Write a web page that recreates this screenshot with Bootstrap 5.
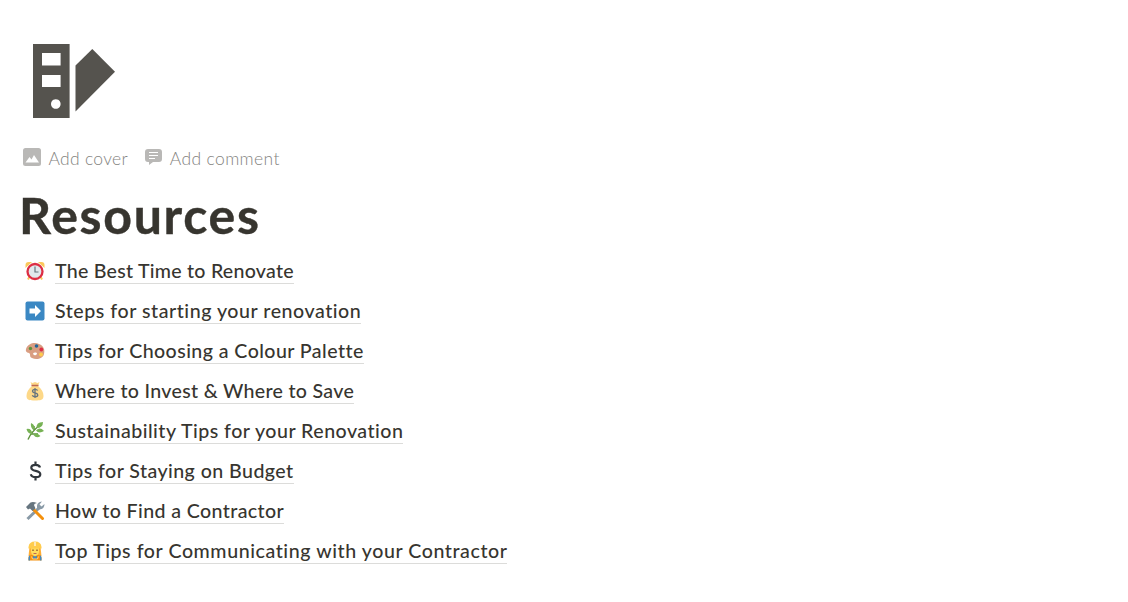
<!DOCTYPE html>
<html lang="en">
<head>
  <meta charset="UTF-8">
  <title>Resources</title>
  <meta name="viewport" content="width=device-width, initial-scale=1">
  <!-- Bootstrap CSS -->
  <link href="https://cdn.jsdelivr.net/npm/bootstrap@5.3.3/dist/css/bootstrap.min.css" rel="stylesheet">
  <style>
    body {
      background: #fff;
      color: #37352f;
      font-family: Lato, "Noto Sans", sans-serif;
      font-variant-ligatures: none;
    }
    .page {
      padding: 43px 0 0 21px;
    }
    .page-icon {
      width: 84px;
      height: 76px;
      margin-left: 11px;
    }
    .page-actions {
      height: 28px;
      margin-top: 26px;
      color: #85847f;
      font-size: 17.5px;
      font-weight: 300;
      line-height: 28px;
    }
    .page-actions svg {
      margin-bottom: 4px;
    }
    .act-cover {
      margin: 0 16px 0 5.5px;
      letter-spacing: .28px;
    }
    .act-comment {
      margin-left: 6px;
      letter-spacing: .36px;
    }
    .page-title {
      margin: 8px 0 0 -2px;
      height: 76px;
      font-size: 50px;
      font-weight: 700;
      letter-spacing: 1.7px;
      line-height: 68px;
      -webkit-text-stroke: .4px #37352f;
    }
    .page-row {
      height: 40px;
    }
    .page-row svg {
      width: 20px;
      height: 20px;
      margin: 3.5px 10.5px 0 3.5px;
    }
    .page-row a {
      height: 25px;
      margin-top: 2px;
      border-bottom: 1px solid #dcdcda;
      color: #37352f;
      font-size: 19.6px;
      font-weight: 500;
      line-height: 24px;
      text-decoration: none;
      white-space: nowrap;
    }
    /* tracking of each title */
    .page-row:nth-child(1) a { letter-spacing: .25px; }
    .page-row:nth-child(2) a { letter-spacing: .54px; }
    .page-row:nth-child(3) a { letter-spacing: .43px; }
    .page-row:nth-child(4) a { letter-spacing: .3px; }
    .page-row:nth-child(5) a { letter-spacing: .48px; }
    .page-row:nth-child(6) a { letter-spacing: .44px; }
    .page-row:nth-child(7) a { letter-spacing: .39px; }
    .page-row:nth-child(8) a { letter-spacing: .57px; }
  </style>
</head>
<body>

  <main class="page">
    <svg class="page-icon d-block" viewBox="0 0 84 76" fill="#55534e">
      <path fill-rule="evenodd" d="M1 1h36.600v74H1zM10 10v12.600h18.600V10zM10 32v12h18.600V32zM23.800 56.200a4.800 4.800 0 1 0 .01 0z"/>
      <path d="M43.500 22.500L60.300 6 83 28.700 43.500 68.500z"/>
    </svg>

    <div class="page-actions d-flex align-items-center">
      <svg width="22" height="20" viewBox="0 0 22 20">
        <rect x="2" y="1" width="18" height="18" rx="2.500" fill="#b9b8b6"/>
        <path d="M4.500 15.500l4-5.500 2 2.500 2.500-4.500 5 7.500z" fill="#fff"/>
      </svg>
      <span class="act-cover">Add cover</span>
      <svg width="20" height="20" viewBox="0 0 20 20">
        <path d="M4 2h11q3 0 3 3v7q0 3-3 3H9l-4 3V15H4q-3 0-3-3V5q0-3 3-3z" fill="#b9b8b6"/>
        <path d="M5 5.500h9M5 8.500h9M5 11.500h6" stroke="#fff" stroke-width="1"/>
      </svg>
      <span class="act-comment">Add comment</span>
    </div>

    <h1 class="page-title">Resources</h1>

    <div class="d-flex flex-column">
      <!-- alarm clock -->
      <div class="page-row d-flex align-items-start">
        <svg viewBox="0 0 20 20">
          <path d="M.5 7V4q0-3 3-3h3.500zM19.500 7V4q0-3-3-3h-3.500z" fill="#fbc95d"/>
          <path d="M4.500 15.500L3 18.500M15.500 15.500l1.500 3" stroke="#fbc95d" stroke-width="2"/>
          <circle cx="10" cy="10.500" r="7.500" fill="#e1e8ed" stroke="#dd2e44" stroke-width="2.300"/>
          <path d="M10 5.500V11h3.500" fill="none" stroke="#66757f" stroke-width="1.200"/>
        </svg>
        <a href="#">The Best Time to Renovate</a>
      </div>
      <!-- right arrow -->
      <div class="page-row d-flex align-items-start">
        <svg viewBox="0 0 20 20">
          <rect x=".5" y=".5" width="19" height="19" rx="2" fill="#3b88c3"/>
          <path d="M4.500 7.500H10V4l6 6-6 6v-3.500H4.500z" fill="#fff"/>
        </svg>
        <a href="#">Steps for starting your renovation</a>
      </div>
      <!-- palette -->
      <div class="page-row d-flex align-items-start">
        <svg viewBox="0 0 20 20">
          <path fill-rule="evenodd" d="M1 8C3 2 10 1 14 3c5 2 6 6 5 10-1 5-8 6-12 4-3-1-1-4-3-5-3-.5-3.500-2-3-4zM8 12.500q.5 2.500 3 1.500 2-1.500 0-2.500-2-.5-3 1z" fill="#d99e82"/>
          <circle cx="5.500" cy="7.500" r="1.700" fill="#5c913b"/>
          <circle cx="11.500" cy="5" r="1.800" fill="#226699"/>
          <circle cx="16.300" cy="8.500" r="1.900" fill="#dd2e44"/>
          <circle cx="16" cy="13.500" r="1.900" fill="#ffcc4d"/>
        </svg>
        <a href="#">Tips for Choosing a Colour Palette</a>
      </div>
      <!-- money bag -->
      <div class="page-row d-flex align-items-start">
        <svg viewBox="0 0 20 20">
          <path d="M5.500 1l2 1 2.500-1 2.500 1 2-1-1.500 4c4 3 5.500 7 5.500 10 0 4-3 4.500-8.500 4.500S1.500 19 1.500 15C1.500 12 3 8 7 5z" fill="#fdd888"/>
          <path d="M6.500 4.500h7" stroke="#bf6952" stroke-width="1.500"/>
          <path d="M12.700 9.500Q12 8.300 10 8.300q-2.500 0-2.500 1.900c0 2.300 5.300 1.300 5.300 3.700 0 2.200-4.500 2.500-5.500.3M10 7v10" fill="none" stroke="#67757f" stroke-width="1.300"/>
        </svg>
        <a href="#">Where to Invest &amp; Where to Save</a>
      </div>
      <!-- herb -->
      <div class="page-row d-flex align-items-start">
        <svg viewBox="0 0 20 20">
          <path d="M3 18.500Q6 11 15 4M6.500 13H13M9 9V5" fill="none" stroke="#5c913b" stroke-width="1.400"/>
          <path d="M1.500 8q5-1 6 5-5 0-6-5zM6 2q5 2 3 7.500Q5 7 6 2zM11.500 7q-.5-6 6.500-6 0 6-6.500 6zM11 9.500q4-4 8 .5-5 3-8-.5zM8.500 14q3-3.500 7 1-4 3-7-1z" fill="#77b255"/>
        </svg>
        <a href="#">Sustainability Tips for your Renovation</a>
      </div>
      <!-- dollar sign -->
      <div class="page-row d-flex align-items-start">
        <svg viewBox="0 0 20 20">
          <path d="M15 6.500Q14.500 3.800 10.500 3.800 6.300 3.800 6.300 6.700c0 4.300 9 2 9 6.500 0 4-8.500 4-9.500 0M10.500.5v3.500M10.500 16v3.500" fill="none" stroke="#31373d" stroke-width="2.200"/>
        </svg>
        <a href="#">Tips for Staying on Budget</a>
      </div>
      <!-- hammer and wrench -->
      <div class="page-row d-flex align-items-start">
        <svg viewBox="0 0 20 20">
          <path d="M2.500 18L14 7" stroke="#8899a6" stroke-width="3"/>
          <path d="M12 5q0-4 5-4.500L14.500 3.500l2 2L19.500 3q0 5-5 5.500-3 0-2.500-3.500z" fill="#8899a6"/>
          <path d="M8.500 8.500l9 9" stroke="#f4900c" stroke-width="3" stroke-linecap="round"/>
          <path d="M1 6l4.500-4.500Q8 .5 12 2 9 2.500 9 4l1.500 3.500L7.500 10 5 7.500 3 8.500z" fill="#66757f"/>
        </svg>
        <a href="#">How to Find a Contractor</a>
      </div>
      <!-- construction worker -->
      <div class="page-row d-flex align-items-start">
        <svg viewBox="0 0 20 20">
          <path d="M4.500 6h11l1 9h-13z" fill="#ffac33"/>
          <path d="M3.500 19.500V17q0-3 3-3h7q3 0 3 3v2.500z" fill="#f4900c"/>
          <path d="M3.500 19.500V17q0-2 1.500-2.700v5.200zM16.500 19.500V17q0-2-1.500-2.700v5.200z" fill="#4289c1"/>
          <path d="M8 14l2 2 2-2v3.500H8z" fill="#4289c1"/>
          <path d="M6.500 15.500l1 2.500h5l1-2.500" fill="none" stroke="#ffe8b6" stroke-width=".7"/>
          <path d="M6 6h8v5q-1 4-4 4t-4-4z" fill="#ffdc5d"/>
          <path d="M8 8.500v1.500M12 8.500v1.500" stroke="#662113"/>
          <path d="M8.500 12.500h3" stroke="#c1694f"/>
          <path d="M3.500 7.500V6Q4 .5 10 .5T16.500 6v1.500z" fill="#ffcc4d"/>
          <path d="M9 1h2v4H9z" fill="#ffe8b6"/>
        </svg>
        <a href="#">Top Tips for Communicating with your Contractor</a>
      </div>
    </div>
  </main>

  <!-- Bootstrap Bundle -->
  <script src="https://cdn.jsdelivr.net/npm/bootstrap@5.3.3/dist/js/bootstrap.bundle.min.js"></script>
</body>
</html>
